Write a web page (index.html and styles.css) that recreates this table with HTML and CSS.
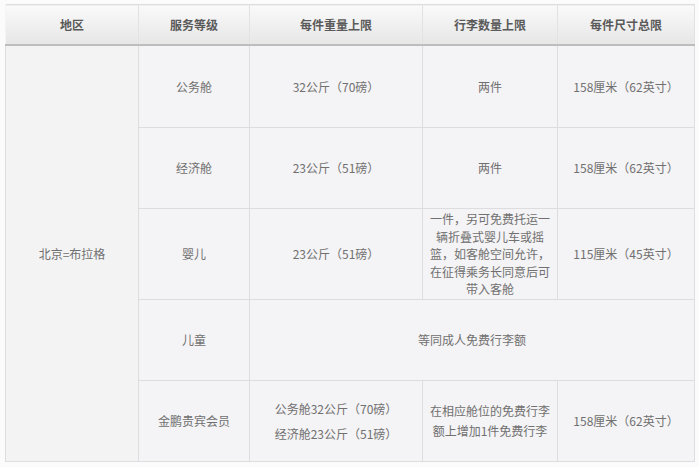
FILE: index.html
```html
<!DOCTYPE html>
<html lang="zh">
<head>
<meta charset="utf-8">
<link rel="stylesheet" href="styles.css">
</head>
<body>
<div class="wrap">
<table class="bag">
  <colgroup>
    <col class="c1"><col class="c2"><col class="c3"><col class="c4"><col class="c5">
  </colgroup>
  <thead>
    <tr>
      <th>地区</th>
      <th>服务等级</th>
      <th>每件重量上限</th>
      <th>行李数量上限</th>
      <th>每件尺寸总限</th>
    </tr>
  </thead>
  <tbody>
    <tr class="r1">
      <td rowspan="5" class="region">北京=布拉格</td>
      <td>公务舱</td>
      <td>32公斤（70磅）</td>
      <td>两件</td>
      <td>158厘米（62英寸）</td>
    </tr>
    <tr class="r2">
      <td>经济舱</td>
      <td>23公斤（51磅）</td>
      <td>两件</td>
      <td>158厘米（62英寸）</td>
    </tr>
    <tr class="r3">
      <td>婴儿</td>
      <td>23公斤（51磅）</td>
      <td class="multi">一件，另可免费托运一辆折叠式婴儿车或摇篮，如客舱空间允许，在征得乘务长同意后可带入客舱</td>
      <td>115厘米（45英寸）</td>
    </tr>
    <tr class="r4">
      <td>儿童</td>
      <td colspan="3">等同成人免费行李额</td>
    </tr>
    <tr class="r5">
      <td>金鹏贵宾会员</td>
      <td><p class="line">公务舱32公斤（70磅）</p><p class="line">经济舱23公斤（51磅）</p></td>
      <td class="multi2">在相应舱位的免费行李额上增加1件免费行李</td>
      <td>158厘米（62英寸）</td>
    </tr>
  </tbody>
</table>
</div>
</body>
</html>
```

FILE: styles.css
```css
html, body {
  margin: 0;
  padding: 0;
  background: #fbfbfb;
}
body {
  font-family: "Noto Sans CJK SC", "Liberation Sans", sans-serif;
}
.wrap {
  padding: 4px 0 0 5px;
}
.bag {
  border-collapse: collapse;
  table-layout: fixed;
  width: 689px;
  border: 1px solid #dcdcdc;
  font-size: 12px;
  color: #707070;
}
.c1 { width: 133px; }
.c2 { width: 111px; }
.c3 { width: 173px; }
.c4 { width: 135px; }
.c5 { width: 137px; }
.bag th {
  height: 39px;
  padding: 0;
  font-weight: 600;
  color: #5a5a5a;
  background: linear-gradient(#fafafa, #ececec 70%, #e6e6e6);
  border-left: 1px solid #f4f4f4;
  border-right: 1px solid #e2e2e2;
  border-bottom: 2px solid #bdbdbd;
  text-align: center;
  vertical-align: middle;
}
.bag td {
  padding: 0 12px;
  background: #f4f3f5;
  border: 1px solid #dddcdf;
  text-align: center;
  vertical-align: middle;
  line-height: 17.5px;
}
.bag td.region {
  background: #f3f3f4;
}
.r1 td { height: 81px; }
.r2 td { height: 80px; }
.r3 td { height: 90px; }
.r4 td { height: 80px; }
.r5 td { height: 80px; }
.bag td.multi {
  padding: 0 4px;
}
.bag td.multi2 {
  padding: 0 4px;
  line-height: 20px;
}
.line {
  margin: 0;
  line-height: 25px;
}
```
